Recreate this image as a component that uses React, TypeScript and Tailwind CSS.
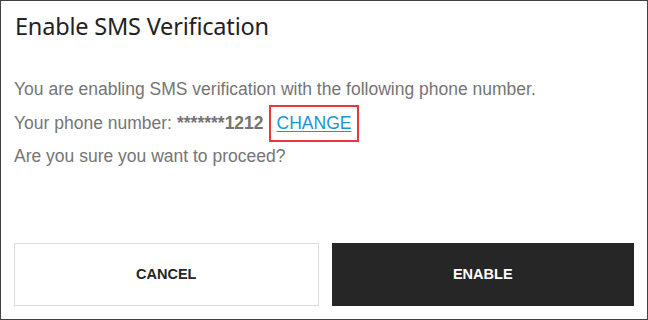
import React from "react";

export default function App() {
  return (
    <div className="w-[648px] h-[320px] bg-white border border-[#404040] flex flex-col px-[13px] pb-[13px] font-['Liberation_Sans',Arial,sans-serif]">
      <h1 className="pt-[9px] pl-[1px] text-[23.5px] leading-[32px] text-[#222] font-['Noto_Sans',sans-serif] tracking-[-0.2px]">
        Enable SMS Verification
      </h1>
      <div className="mt-[31px] text-[17.5px] leading-[33.5px] text-[#757575]">
        <p>You are enabling SMS verification with the following phone number.</p>
        <p className="flex items-center h-[33.5px]">
          <span>Your phone number:</span>
          <span className="ml-[5px] font-bold">*******1212</span>
          <span className="ml-[5px] border-2 border-[#e8383d] h-[37px] px-[6px] flex items-center">
            <a className="text-[#1a96d4] underline underline-offset-2 leading-none">CHANGE</a>
          </span>
        </p>
        <p>Are you sure you want to proceed?</p>
      </div>
      <div className="mt-auto flex gap-[13px]">
        <button className="flex-1 h-[63px] border border-[#dcdcdc] bg-white text-[#262626] font-bold text-[14.5px] uppercase">
          Cancel
        </button>
        <button className="flex-1 h-[63px] bg-[#262626] text-white font-bold text-[14.5px] uppercase">
          Enable
        </button>
      </div>
    </div>
  );
}
